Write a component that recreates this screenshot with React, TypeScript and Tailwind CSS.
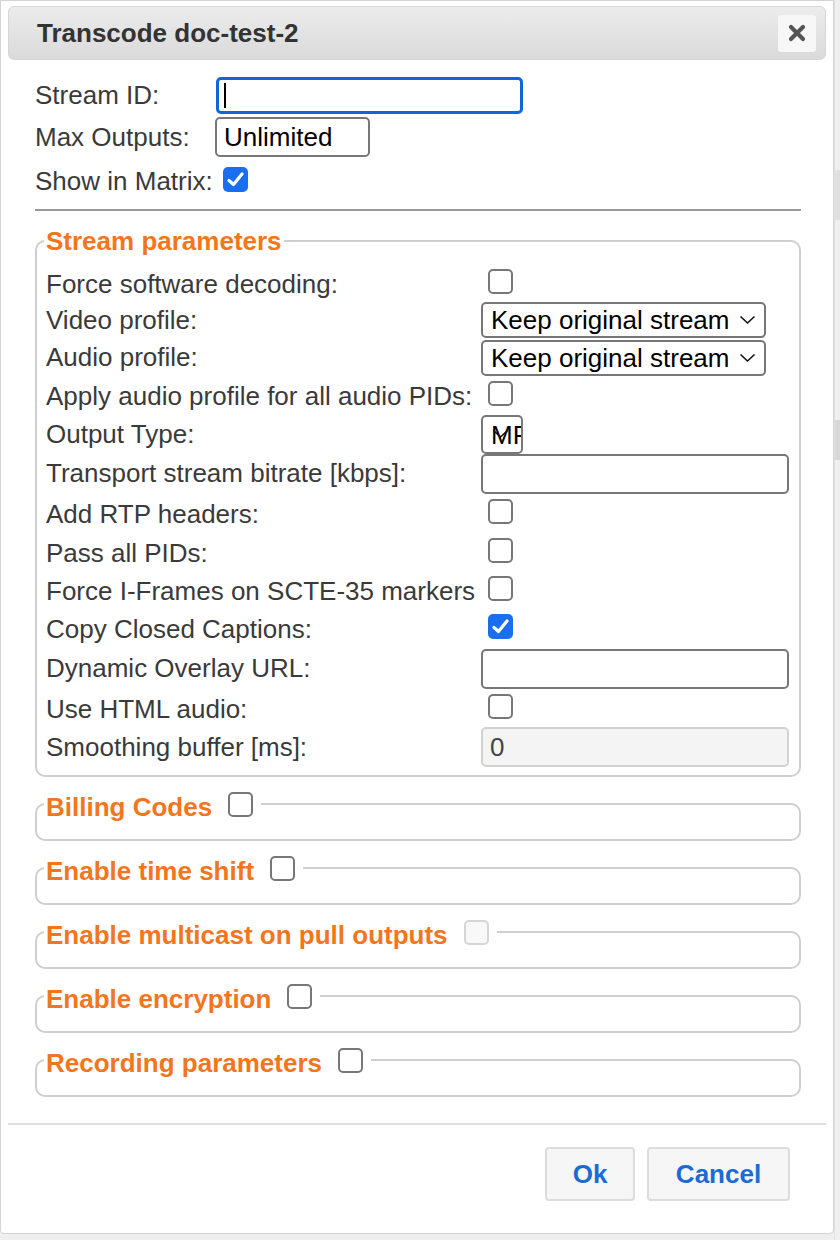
import React from "react";

const font = { fontFamily: '"Liberation Sans", Arial, sans-serif' };

type Row =
  | { label: string; h: string; kind: "check"; checked?: boolean }
  | { label: string; h: string; kind: "select"; value: string }
  | { label: string; h: string; kind: "tiny" }
  | { label: string; h: string; kind: "input"; value?: string; readOnly?: boolean };

const rows: Row[] = [
  { label: "Force software decoding:", h: "h-[36px]", kind: "check" },
  { label: "Video profile:", h: "h-[36px]", kind: "select", value: "Keep original stream" },
  { label: "Audio profile:", h: "h-[39px]", kind: "select", value: "Keep original stream" },
  { label: "Apply audio profile for all audio PIDs:", h: "h-[39px]", kind: "check" },
  { label: "Output Type:", h: "h-[37px]", kind: "tiny" },
  { label: "Transport stream bitrate [kbps]:", h: "h-[41px]", kind: "input" },
  { label: "Add RTP headers:", h: "h-[40px]", kind: "check" },
  { label: "Pass all PIDs:", h: "h-[38px]", kind: "check" },
  { label: "Force I-Frames on SCTE-35 markers", h: "h-[39px]", kind: "check" },
  { label: "Copy Closed Captions:", h: "h-[37px]", kind: "check", checked: true },
  { label: "Dynamic Overlay URL:", h: "h-[41px]", kind: "input" },
  { label: "Use HTML audio:", h: "h-[40px]", kind: "check" },
  { label: "Smoothing buffer [ms]:", h: "h-[36px]", kind: "input", value: "0", readOnly: true },
];

const sections = [
  "Billing Codes",
  "Enable time shift",
  "Enable multicast on pull outputs",
  "Enable encryption",
  "Recording parameters",
];

function Checkbox({ checked, disabled, className = "" }: { checked?: boolean; disabled?: boolean; className?: string }) {
  if (checked) {
    return (
      <span className={`w-[25px] h-[25px] shrink-0 rounded-[5px] bg-[#1a6ff0] flex items-center justify-center ${className}`}>
        <svg width="17" height="15" viewBox="0 0 17 15" fill="none">
          <path d="M2 8.5 L6.5 12.5 L15 2" stroke="white" strokeWidth="3.2" strokeLinecap="round" strokeLinejoin="round" />
        </svg>
      </span>
    );
  }
  return (
    <span
      className={`w-[25px] h-[25px] shrink-0 rounded-[5px] border-2 ${
        disabled ? "border-[#d6d6d6] bg-[#f8f8f8]" : "border-[#777] bg-white"
      } ${className}`}
    />
  );
}

function Chevron() {
  return (
    <svg width="17" height="10" viewBox="0 0 17 10" fill="none">
      <path d="M1.5 1.5 L8.5 8 L15.5 1.5" stroke="#111" strokeWidth="1.6" />
    </svg>
  );
}

function Control({ row }: { row: Row }) {
  if (row.kind === "check") {
    return <Checkbox checked={row.checked} className="ml-[7px] mb-[6px]" />;
  }
  if (row.kind === "select") {
    return (
      <div className="w-[285px] h-[36px] border-2 border-[#777] rounded-[5px] bg-white flex items-center justify-between pl-[8px] pr-[8px] text-black">
        <span className="leading-none">{row.value}</span>
        <Chevron />
      </div>
    );
  }
  if (row.kind === "tiny") {
    return (
      <div className="relative w-[42px] h-[39px] border-2 border-[#777] rounded-[5px] bg-white overflow-hidden flex items-center pl-[8px] text-black">
        <span className="leading-none whitespace-nowrap">MP</span>
        <span className="absolute left-[9px] top-[12px]">
          <Chevron />
        </span>
      </div>
    );
  }
  return (
    <div
      className={`w-[308px] h-[40px] border-2 rounded-[5px] flex items-center pl-[7px] ${
        row.readOnly ? "border-[#d2d2d2] bg-[#f4f4f4] text-[#444]" : "border-[#777] bg-white text-black"
      }`}
    >
      {row.value}
    </div>
  );
}

export default function App() {
  return (
    <div className="min-h-[1240px] bg-[#efefef] flex items-start text-[26px] text-[#3a3a3a]" style={font}>
      {/* Dialog */}
      <div className="w-[834px] bg-white border border-[#d4d4d4] rounded-b-[4px] pt-[5px] px-[7px] pb-[32px]">
        {/* Title bar */}
        <div className="h-[54px] rounded-[6px] border border-[#d6d6d6] bg-gradient-to-b from-[#ececec] to-[#dadada] flex items-center justify-between pl-[28px] pr-[9px]">
          <span className="font-bold text-[#333] leading-none">Transcode doc-test-2</span>
          <button className="w-[38px] h-[37px] rounded-[3px] bg-[#f7f7f7] flex items-center justify-center">
            <svg width="18" height="18" viewBox="0 0 18 18">
              <path d="M3 3 L15 15 M15 3 L3 15" stroke="#555" strokeWidth="4.2" strokeLinecap="round" />
            </svg>
          </button>
        </div>

        <div className="pl-[27px] pr-[25px] pt-[16px]">
          {/* Top fields */}
          <div className="h-[38px] flex items-center">
            <span className="w-[180px] shrink-0">Stream ID:</span>
            <div className="ml-[1px] w-[307px] h-[37px] border-[3px] border-[#1366d6] rounded-[5px] bg-white flex items-center pl-[5px]">
              <span className="w-[2px] h-[25px] bg-black" />
            </div>
          </div>
          <div className="h-[40px] mt-[3px] flex items-center">
            <span className="w-[180px] shrink-0">Max Outputs:</span>
            <div className="w-[155px] h-[40px] border-2 border-[#777] rounded-[5px] bg-white flex items-center pl-[7px] text-black">
              Unlimited
            </div>
          </div>
          <div className="h-[38px] mt-[5px] flex items-center">
            <span className="whitespace-nowrap">Show in Matrix:</span>
            <Checkbox checked className="ml-[10px] mb-[4px]" />
          </div>

          <div className="mt-[9px] border-t-2 border-[#9a9a9a]" />

          {/* Stream parameters */}
          <fieldset className="mt-[15px] border-2 border-[#cfcfcf] rounded-[10px] pl-[7px] pr-[7px] pt-[10px] pb-[10px]">
            <legend className="px-[2px] font-bold text-[#f4761c] leading-[30px]">Stream parameters</legend>
            {rows.map((row) => (
              <div key={row.label} className={`${row.h} flex items-center pl-[2px]`}>
                <span className="w-[435px] shrink-0 whitespace-nowrap">{row.label}</span>
                <Control row={row} />
              </div>
            ))}
          </fieldset>

          {/* Collapsed sections */}
          <div className="mt-[12px] flex flex-col gap-[12px]">
            {sections.map((title) => (
              <fieldset key={title} className="border-2 border-[#cfcfcf] rounded-[10px] pl-[7px] pr-[7px] pb-[20px]">
                <legend className="px-[2px]">
                  <div className="h-[30px] flex items-center gap-[16px] pr-[6px]">
                    <span className="font-bold text-[#f4761c] leading-[30px] pt-[6px] whitespace-nowrap">{title}</span>
                    <Checkbox disabled={title === "Enable multicast on pull outputs"} />
                  </div>
                </legend>
              </fieldset>
            ))}
          </div>
        </div>

        {/* Footer */}
        <div className="mt-[26px] border-t-2 border-[#dedede]" />
        <div className="mt-[22px] flex justify-end gap-[12px] pr-[36px]">
          <button className="w-[90px] h-[54px] rounded-[4px] border-2 border-[#dcdcdc] bg-[#f6f6f6] font-bold text-[#1a6bd4]">
            Ok
          </button>
          <button className="w-[143px] h-[54px] rounded-[4px] border-2 border-[#dcdcdc] bg-[#f6f6f6] font-bold text-[#1a6bd4]">
            Cancel
          </button>
        </div>
      </div>

      {/* Background page edge */}
      <div className="flex-1 min-h-[1240px] flex flex-col border-l border-[#e2e2e2]">
        <div className="h-[170px]" />
        <div className="h-[50px] bg-[#e0e0e0]" />
        <div className="h-[200px]" />
        <div className="h-[40px] bg-[#d8d8d8]" />
      </div>
    </div>
  );
}
